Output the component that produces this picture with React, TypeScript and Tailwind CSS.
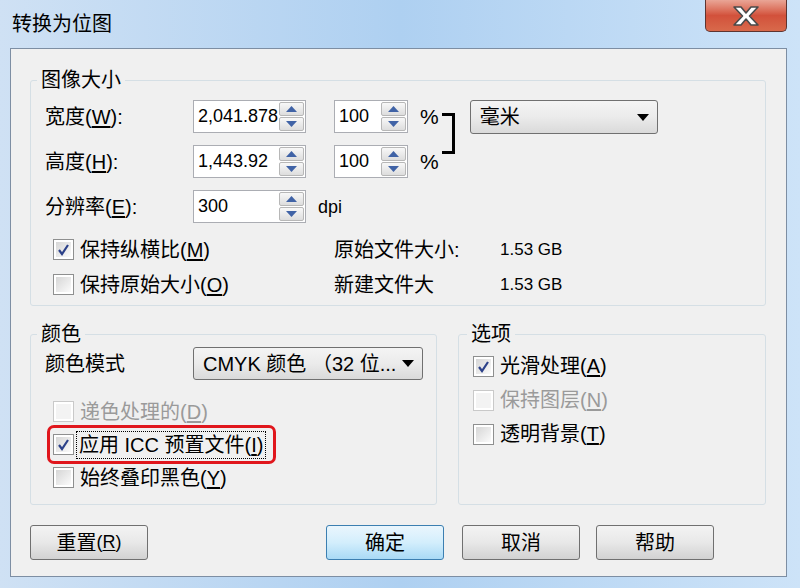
import React from "react";

const Tri = () => (
  <svg width="12" height="7" viewBox="0 0 12 7">
    <path d="M0 0h12L6 7z" fill="#000" />
  </svg>
);

const Spin = ({ value, className }: { value: string; className: string }) => (
  <div className={`flex border border-[#abadb3] bg-white ${className}`}>
    <div className="flex flex-1 items-center pl-[4px] text-[18px]">{value}</div>
    <div className="flex w-[26px] flex-col gap-[1px] py-[1px] pr-[1px]">
      {["up", "down"].map((d) => (
        <div
          key={d}
          className="flex flex-1 items-center justify-center rounded-[2px] border border-[#b7b7b7] bg-linear-to-b from-[#f8f8f8] to-[#dddddd]"
        >
          <svg width="11" height="6" viewBox="0 0 11 6">
            <path d={d === "up" ? "M0 6h11L5.5 0z" : "M0 0h11L5.5 6z"} fill="#4063a6" />
          </svg>
        </div>
      ))}
    </div>
  </div>
);

const Combo = ({ text, className }: { text: string; className: string }) => (
  <div
    className={`flex items-center justify-between rounded-[3px] border border-[#707070] bg-linear-to-b from-[#f4f4f4] via-[#ebebeb] to-[#dadada] pl-[9px] pr-[8px] ${className}`}
  >
    <span className="text-[20px] leading-none">{text}</span>
    <Tri />
  </div>
);

const Check = ({ checked, disabled }: { checked?: boolean; disabled?: boolean }) => (
  <div
    className={`h-[21px] w-[21px] shrink-0 border bg-white p-[2px] ${
      disabled ? "border-[#c9c9c9]" : "border-[#8e8f8f]"
    }`}
  >
    <div
      className={`flex h-full w-full items-center justify-center ${
        disabled ? "bg-[#f3f3f3]" : "bg-linear-to-br from-[#d6d6d6] to-[#fbfbfb]"
      }`}
    >
      {checked && (
        <svg width="13" height="13" viewBox="0 0 13 13">
          <path d="M2 7l3 4L11 2" fill="none" stroke="#2c4189" strokeWidth="2.2" />
        </svg>
      )}
    </div>
  </div>
);

const Key = ({ k }: { k: string }) => (
  <>
    (<span className="underline underline-offset-2">{k}</span>)
  </>
);

const CheckRow = ({
  label,
  k,
  checked,
  disabled,
  className,
}: {
  label: string;
  k: string;
  checked?: boolean;
  disabled?: boolean;
  className: string;
}) => (
  <div className={`flex items-center gap-[6px] ${className}`}>
    <Check checked={checked} disabled={disabled} />
    <span className={`text-[20px] leading-none ${disabled ? "text-[#9a9a9a]" : "text-black"}`}>
      {label}
      <Key k={k} />
    </span>
  </div>
);

const Btn = ({ children, primary }: { children: React.ReactNode; primary?: boolean }) => (
  <div
    className={`flex h-[35px] w-[118px] items-center justify-center rounded-[3px] border text-[20px] ${
      primary
        ? "border-[#3c7fb1] bg-linear-to-b from-[#eaf6fd] via-[#d3eefc] to-[#a9daf6]"
        : "border-[#707070] bg-linear-to-b from-[#f3f3f3] via-[#e8e8e8] to-[#d2d2d2]"
    }`}
  >
    {children}
  </div>
);

export default function App() {
  return (
    <div
      className="flex h-[588px] w-[800px] flex-col overflow-hidden bg-linear-to-r from-[#cfe1f4] via-[#aed0f1] to-[#cde3f8] text-black"
      style={{ fontFamily: '"Liberation Sans", "Noto Sans CJK SC", sans-serif' }}
    >
      {/* title bar */}
      <div className="flex h-[48px] shrink-0 items-start justify-between">
        <div className="ml-[12px] mt-[11px] text-[20px] leading-[26px]">转换为位图</div>
        <div className="mr-[13px] flex h-[32px] w-[82px] items-center justify-center rounded-b-[5px] border border-t-0 border-[#5e3430] bg-linear-to-b from-[#e9a596] via-[#d2513b] to-[#d8694b]">
          <svg width="30" height="22" viewBox="0 0 30 22">
            <path
              d="M3 2h7l5 6 5-6h7l-8.5 9L27 20h-7l-5-6-5 6H3l8.5-9z"
              fill="#fff"
              stroke="#4a4a4a"
              strokeWidth="1.6"
              strokeLinejoin="round"
            />
          </svg>
        </div>
      </div>

      {/* client area */}
      <div className="ml-[10px] mr-[13px] flex h-[529px] shrink-0 flex-col border border-[#7d8ea3] bg-[#f0f0f0] pl-[19px] pr-[20px] pt-[19px]">
        {/* 图像大小 */}
        <fieldset className="rounded-[3px] border border-[#d5dfe5] px-0">
          <legend className="ml-[6px] px-[4px] text-[20px] leading-[24px]">图像大小</legend>
          <div className="pb-[3px] pl-[14px] pt-[8px]">
            <div className="flex items-start">
              <div className="flex flex-col gap-[12px]">
                <div className="flex h-[33px] items-center">
                  <span className="w-[148px] text-[20px] leading-none">
                    宽度<Key k="W" />:
                  </span>
                  <Spin value="2,041.878" className="h-[33px] w-[113px]" />
                  <Spin value="100" className="ml-[28px] h-[33px] w-[74px]" />
                  <span className="ml-[12px] text-[21px] leading-none">%</span>
                </div>
                <div className="flex h-[33px] items-center">
                  <span className="w-[148px] text-[20px] leading-none">
                    高度<Key k="H" />:
                  </span>
                  <Spin value="1,443.92" className="h-[33px] w-[113px]" />
                  <Spin value="100" className="ml-[28px] h-[33px] w-[74px]" />
                  <span className="ml-[12px] text-[21px] leading-none">%</span>
                </div>
              </div>
              <div className="ml-[3px] mt-[13px] h-[41px] w-[13px] border-[3px] border-l-0 border-black" />
              <Combo text="毫米" className="ml-[15px] h-[34px] w-[188px]" />
            </div>

            <div className="mt-[12px] flex h-[33px] items-center">
              <span className="w-[148px] text-[20px] leading-none">
                分辨率<Key k="E" />:
              </span>
              <Spin value="300" className="h-[33px] w-[113px]" />
              <span className="ml-[12px] text-[18px] leading-none">dpi</span>
            </div>

            <div className="mt-[9px] grid grid-cols-[289px_166px_1fr]">
              <CheckRow label="保持纵横比" k="M" checked className="ml-[8px] h-[35px]" />
              <span className="flex h-[35px] items-center text-[20px]">原始文件大小:</span>
              <span className="flex h-[35px] items-center text-[17px]">1.53 GB</span>
              <CheckRow label="保持原始大小" k="O" className="ml-[8px] h-[35px]" />
              <span className="flex h-[35px] items-center text-[20px]">新建文件大</span>
              <span className="flex h-[35px] items-center text-[17px]">1.53 GB</span>
            </div>
          </div>
        </fieldset>

        <div className="mt-[16px] flex gap-[21px]">
          {/* 颜色 */}
          <fieldset className="w-[407px] rounded-[3px] border border-[#d5dfe5] px-0">
            <legend className="ml-[6px] px-[4px] text-[20px] leading-[24px]">颜色</legend>
            <div className="pb-[10px] pl-[14px] pt-[1px]">
              <div className="flex h-[33px] items-center">
                <span className="w-[148px] text-[20px] leading-none">颜色模式</span>
                <Combo text="CMYK 颜色 （32 位..." className="h-[33px] w-[230px]" />
              </div>
              <div className="mt-[15px] flex flex-col">
                <CheckRow label="递色处理的" k="D" disabled className="ml-[8px] h-[33px]" />
                <div className="-my-[3px] ml-[2px] flex h-[39px] w-[229px] items-center rounded-[7px] border-[3px] border-[#e0161c] pl-[3px]">
                  <Check checked />
                  <span className="ml-[3px] px-[2px] py-[3px] text-[20px] leading-none outline-1 outline-dotted outline-black">
                    应用 ICC 预置文件<Key k="I" />
                  </span>
                </div>
                <CheckRow label="始终叠印黑色" k="Y" className="ml-[8px] h-[33px]" />
              </div>
            </div>
          </fieldset>

          {/* 选项 */}
          <fieldset className="w-[308px] rounded-[3px] border border-[#d5dfe5] px-0">
            <legend className="ml-[8px] px-[4px] text-[20px] leading-[24px]">选项</legend>
            <div className="flex flex-col pl-[14px] pt-[3px]">
              <CheckRow label="光滑处理" k="A" checked className="h-[34px]" />
              <CheckRow label="保持图层" k="N" disabled className="h-[34px]" />
              <CheckRow label="透明背景" k="T" className="h-[34px]" />
            </div>
          </fieldset>
        </div>

        <div className="mt-[20px] flex">
          <Btn>
            重置<span className="text-[18px]"><Key k="R" /></span>
          </Btn>
          <div className="ml-[178px] flex gap-[18px]">
            <Btn primary>确定</Btn>
            <Btn>取消</Btn>
            <div className="-ml-[2px]">
              <Btn>帮助</Btn>
            </div>
          </div>
        </div>
      </div>
    </div>
  );
}
